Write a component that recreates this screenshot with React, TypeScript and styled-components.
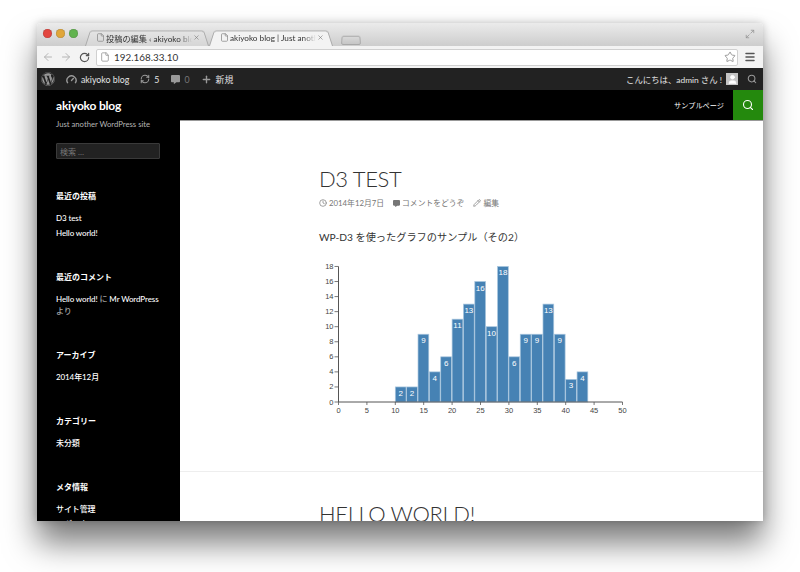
import React from 'react';
import styled, { createGlobalStyle } from 'styled-components';
import {
  ArrowLeft,
  ArrowRight,
  Clock,
  File,
  Gauge,
  Maximize2,
  Menu,
  Pencil,
  Plus,
  RefreshCw,
  RotateCw,
  Search,
  Star,
  User,
  X,
} from 'lucide-react';
import { FaWordpress, FaCommentAlt } from 'react-icons/fa';

const FONT = `Lato, "Noto Sans CJK JP", sans-serif`;

const Global = createGlobalStyle`
  html, body {
    margin: 0;
    padding: 0;
    background: #fff;
    overflow: hidden;
  }
  body {
    font-family: ${FONT};
  }
`;

const Desktop = styled.div`
  width: 800px;
  height: 572px;
  padding: 23px 37px 0;
  box-sizing: border-box;
`;

const Window = styled.div`
  width: 726px;
  height: 498px;
  display: flex;
  flex-direction: column;
  overflow: hidden;
  border-radius: 4px 4px 0 0;
  background: #fff;
  box-shadow: 0 22px 32px rgba(0, 0, 0, 0.52), 0 0 8px rgba(0, 0, 0, 0.22);
`;

const TitleBar = styled.div`
  height: 23px;
  flex: none;
  display: flex;
  align-items: flex-end;
  padding: 0 8px 0 6px;
  background: linear-gradient(#ebebeb, #cdcdcd);
`;

const Lights = styled.div`
  display: flex;
  gap: 4px;
  align-self: flex-start;
  margin-top: 6px;
  margin-right: 6px;
`;

const Light = styled.span<{ $color: string }>`
  width: 9px;
  height: 9px;
  border-radius: 50%;
  background: ${(p) => p.$color};
  box-shadow: inset 0 0 1px rgba(0, 0, 0, 0.5);
`;

const Tabs = styled.div`
  display: flex;
  align-items: flex-end;
  flex: 1;
  padding-left: 1px;
`;

const Tab = styled.div<{ $active?: boolean }>`
  position: relative;
  width: 124px;
  height: 17px;
  box-sizing: border-box;
  padding: 0 9px 0 11px;
  display: flex;
  align-items: center;
  gap: 1px;
  font-size: 8.2px;
  color: #333;
  white-space: nowrap;
  z-index: ${(p) => (p.$active ? 2 : 1)};

  &::before {
    content: '';
    position: absolute;
    inset: 0 0 0 0;
    z-index: -1;
    background: ${(p) => (p.$active ? '#f3f3f3' : 'linear-gradient(#e4e4e4, #d6d6d6)')};
    border: 1px solid #aaa;
    border-bottom: none;
    border-radius: 3px 3px 0 0;
    transform: perspective(30px) rotateX(9deg);
    transform-origin: bottom;
  }
`;

const TabTitle = styled.span`
  flex: 1;
  overflow: hidden;
  -webkit-mask-image: linear-gradient(to right, #000 85%, transparent);
  mask-image: linear-gradient(to right, #000 85%, transparent);
`;

const NewTab = styled.div`
  position: relative;
  width: 20px;
  height: 10px;
  margin: 0 0 1px 8px;

  &::before {
    content: '';
    position: absolute;
    inset: 0;
    background: linear-gradient(#d9d9d9, #c6c6c6);
    border: 1px solid #a8a8a8;
    border-radius: 2px;
    transform: perspective(20px) rotateX(9deg);
    transform-origin: bottom;
  }
`;

const Toolbar = styled.div`
  height: 22px;
  flex: none;
  display: flex;
  align-items: center;
  padding: 0 7px 0 5px;
  gap: 6px;
  background: #f3f3f3;
  color: #aaa;
`;

const NavButton = styled.span<{ $dark?: boolean }>`
  width: 12px;
  display: flex;
  justify-content: center;
  color: ${(p) => (p.$dark ? '#555' : '#b5b5b5')};
`;

const UrlBar = styled.div`
  flex: 1;
  height: 17px;
  box-sizing: border-box;
  display: flex;
  align-items: center;
  gap: 4px;
  padding: 0 1px 0 3px;
  background: #fff;
  border: 1px solid #d0d0d0;
  border-radius: 2px;
  font-size: 9.9px;
  color: #333;
`;

const UrlText = styled.span`
  flex: 1;
`;

const AdminBar = styled.div`
  height: 22px;
  flex: none;
  display: flex;
  align-items: center;
  padding: 0 6px 0 4px;
  background: #222;
  color: #e4e4e4;
  font-size: 8.8px;
`;

const AdminItem = styled.span<{ $gap?: number; $muted?: boolean }>`
  display: flex;
  align-items: center;
  gap: 4px;
  margin-right: ${(p) => p.$gap ?? 11}px;
  color: ${(p) => (p.$muted ? '#777' : 'inherit')};
  svg {
    color: #999;
  }
`;

const Greeting = styled(AdminItem)`
  font-size: 8.4px;
  gap: 4px;
`;

const Spacer = styled.div`
  flex: 1;
`;

const Avatar = styled.span`
  width: 12px;
  height: 12px;
  display: flex;
  align-items: flex-end;
  justify-content: center;
  background: #c4c4c4;
  color: #fff;
`;

const SiteHeader = styled.div`
  height: 30px;
  flex: none;
  display: flex;
  align-items: center;
  background: #000;
  color: #fff;
`;

const SiteTitle = styled.div`
  margin-left: 19px;
  font-size: 12px;
  font-weight: 700;
  letter-spacing: -0.2px;
`;

const Nav = styled.div`
  margin-right: 9px;
  font-size: 7.2px;
`;

const SearchButton = styled.div`
  width: 30px;
  height: 30px;
  display: flex;
  align-items: center;
  justify-content: center;
  background: #24890d;
`;

const Body = styled.div`
  flex: 1;
  min-height: 0;
  display: flex;
`;

const Sidebar = styled.aside`
  width: 143px;
  flex: none;
  box-sizing: border-box;
  padding: 0 19px;
  background: #000;
  color: #fff;
  overflow: hidden;
`;

const Tagline = styled.div`
  margin-top: -1px;
  font-size: 7.7px;
  line-height: 10px;
  color: #b5b5b5;
  margin-bottom: 14px;
`;

const SearchField = styled.div`
  width: 104px;
  height: 16px;
  box-sizing: border-box;
  display: flex;
  align-items: center;
  padding-left: 3px;
  margin-bottom: 31px;
  background: #222;
  border: 1px solid #3a3a3a;
  border-radius: 1px;
  font-size: 8px;
  color: #777;
`;

const Widget = styled.section`
  margin-bottom: 31.25px;
`;

const WidgetTitle = styled.h3`
  margin: 0 0 11.25px;
  font-size: 8px;
  line-height: 12px;
  font-weight: 700;
`;

const WidgetLink = styled.div`
  font-size: 8px;
  line-height: 11.5px;
  font-weight: 500;
  letter-spacing: -0.1px;
  margin-bottom: 3.5px;
  width: 105px;
  white-space: normal;
`;

const Muted = styled.span`
  color: #a0a0a0;
`;

const Main = styled.main`
  flex: 1;
  min-width: 0;
  border-top: 1px solid #999;
  overflow: hidden;
  background: #fff;
`;

const Post = styled.article`
  padding: 44px 0 0 139px;
  color: #2b2b2b;
`;

const PostTitle = styled.h1`
  margin: 0;
  font-size: 22px;
  line-height: 28px;
  font-weight: 300;
  letter-spacing: -0.35px;
  text-transform: uppercase;
  color: #333;
`;

const Meta = styled.div`
  display: flex;
  gap: 9px;
  margin-top: 4px;
  font-size: 7.8px;
  line-height: 12px;
  color: #767676;
`;

const MetaItem = styled.span`
  display: flex;
  align-items: center;
  gap: 2px;
`;

const Lead = styled.p`
  margin: 21px 0 18px;
  font-size: 10.2px;
  line-height: 14px;
  font-weight: 400;
  color: #333;
`;

const ChartSvg = styled.svg`
  display: block;
`;

const Divider = styled.hr`
  margin: 54px 0 0;
  border: none;
  border-top: 1px solid #eee;
`;

const NextTitle = styled(PostTitle)`
  margin: 28px 0 0 139px;
`;

const DATA = [2, 2, 9, 4, 6, 11, 13, 16, 10, 18, 6, 9, 9, 13, 9, 3, 4];

const X0 = 19.5;
const Y0 = 140;
const XU = 5.68;
const YU = 7.53;

function Chart() {
  const yTicks = Array.from({ length: 10 }, (_, i) => i * 2);
  const xTicks = Array.from({ length: 11 }, (_, i) => i * 5);

  return (
    <ChartSvg width="320" height="155" viewBox="0 0 320 155">
      {DATA.map((d, i) => {
        const x = X0 + (10 + i * 2) * XU;
        const h = d * YU;
        return (
          <g key={i}>
            <rect
              x={x}
              y={Y0 - h}
              width={2 * XU - 0.6}
              height={h}
              fill="#4682b4"
              stroke="#a9c6de"
              strokeWidth="0.7"
            />
            <text
              x={x + XU - 0.3}
              y={Y0 - h + 9}
              textAnchor="middle"
              fontSize="8"
              fontFamily="Liberation Sans, sans-serif"
              fill="#fff"
            >
              {d}
            </text>
          </g>
        );
      })}
      <path d={`M${X0} ${Y0 - 135.5}V${Y0}H${X0 + 284}`} fill="none" stroke="#555" strokeWidth="1" />
      {yTicks.map((t) => (
        <g key={t}>
          <line x1={X0 - 4} x2={X0} y1={Y0 - t * YU} y2={Y0 - t * YU} stroke="#555" strokeWidth="0.8" />
          <text
            x={X0 - 5}
            y={Y0 - t * YU + 2.5}
            textAnchor="end"
            fontSize="7.5"
            fontFamily="Liberation Sans, sans-serif"
            fill="#444"
          >
            {t}
          </text>
        </g>
      ))}
      {xTicks.map((t) => (
        <g key={t}>
          <line x1={X0 + t * XU} x2={X0 + t * XU} y1={Y0} y2={Y0 + 3} stroke="#555" strokeWidth="0.8" />
          <text
            x={X0 + t * XU}
            y={Y0 + 10.5}
            textAnchor="middle"
            fontSize="7.5"
            fontFamily="Liberation Sans, sans-serif"
            fill="#444"
          >
            {t}
          </text>
        </g>
      ))}
    </ChartSvg>
  );
}

export default function App() {
  return (
    <>
      <Global />
      <Desktop>
        <Window>
          <TitleBar>
            <Lights>
              <Light $color="#e2463f" />
              <Light $color="#e0a63a" />
              <Light $color="#62b34f" />
            </Lights>
            <Tabs>
              <Tab>
                <File size={9} color="#888" />
                <TabTitle>投稿の編集 ‹ akiyoko blog — WordPress</TabTitle>
                <X size={7} color="#777" />
              </Tab>
              <Tab $active>
                <File size={9} color="#888" />
                <TabTitle>akiyoko blog | Just another WordPress</TabTitle>
                <X size={7} color="#777" />
              </Tab>
              <NewTab />
            </Tabs>
            <Maximize2 size={10} color="#999" style={{ alignSelf: 'flex-start', marginTop: 6 }} />
          </TitleBar>
          <Toolbar>
            <NavButton>
              <ArrowLeft size={12} />
            </NavButton>
            <NavButton>
              <ArrowRight size={12} />
            </NavButton>
            <NavButton $dark>
              <RotateCw size={11} strokeWidth={2.6} />
            </NavButton>
            <UrlBar>
              <File size={10} color="#999" />
              <UrlText>192.168.33.10</UrlText>
              <Star size={12} color="#999" />
            </UrlBar>
            <NavButton $dark>
              <Menu size={12} strokeWidth={3} />
            </NavButton>
          </Toolbar>
          <AdminBar>
            <AdminItem $gap={11}>
              <FaWordpress size={14} color="#999" />
            </AdminItem>
            <AdminItem $gap={11}>
              <Gauge size={11} strokeWidth={3} />
              akiyoko blog
            </AdminItem>
            <AdminItem $gap={12}>
              <RefreshCw size={10} strokeWidth={2.5} />
              5
            </AdminItem>
            <AdminItem $gap={11} $muted>
              <FaCommentAlt size={9} />
              0
            </AdminItem>
            <AdminItem $gap={0}>
              <Plus size={11} strokeWidth={3} />
              新規
            </AdminItem>
            <Spacer />
            <Greeting $gap={9}>
              こんにちは、admin さん !
              <Avatar>
                <User size={11} color="#fff" fill="#fff" />
              </Avatar>
            </Greeting>
            <Search size={10} color="#999" strokeWidth={2.5} />
          </AdminBar>
          <SiteHeader>
            <SiteTitle>akiyoko blog</SiteTitle>
            <Spacer />
            <Nav>サンプルページ</Nav>
            <SearchButton>
              <Search size={12} color="#fff" strokeWidth={2.2} />
            </SearchButton>
          </SiteHeader>
          <Body>
            <Sidebar>
              <Tagline>Just another WordPress site</Tagline>
              <SearchField>検索 …</SearchField>
              <Widget>
                <WidgetTitle>最近の投稿</WidgetTitle>
                <WidgetLink>D3 test</WidgetLink>
                <WidgetLink>Hello world!</WidgetLink>
              </Widget>
              <Widget>
                <WidgetTitle>最近のコメント</WidgetTitle>
                <WidgetLink>
                  Hello world! <Muted>に</Muted> Mr WordPress <Muted>より</Muted>
                </WidgetLink>
              </Widget>
              <Widget>
                <WidgetTitle>アーカイブ</WidgetTitle>
                <WidgetLink>2014年12月</WidgetLink>
              </Widget>
              <Widget>
                <WidgetTitle>カテゴリー</WidgetTitle>
                <WidgetLink>未分類</WidgetLink>
              </Widget>
              <Widget>
                <WidgetTitle>メタ情報</WidgetTitle>
                <WidgetLink>サイト管理</WidgetLink>
                <WidgetLink>ログアウト</WidgetLink>
              </Widget>
            </Sidebar>
            <Main>
              <Post>
                <PostTitle>D3 test</PostTitle>
                <Meta>
                  <MetaItem>
                    <Clock size={8} />
                    2014年12月7日
                  </MetaItem>
                  <MetaItem>
                    <FaCommentAlt size={7} />
                    コメントをどうぞ
                  </MetaItem>
                  <MetaItem>
                    <Pencil size={8} />
                    編集
                  </MetaItem>
                </Meta>
                <Lead>WP-D3 を使ったグラフのサンプル（その2）</Lead>
                <Chart />
              </Post>
              <Divider />
              <NextTitle>Hello world!</NextTitle>
            </Main>
          </Body>
        </Window>
      </Desktop>
    </>
  );
}
